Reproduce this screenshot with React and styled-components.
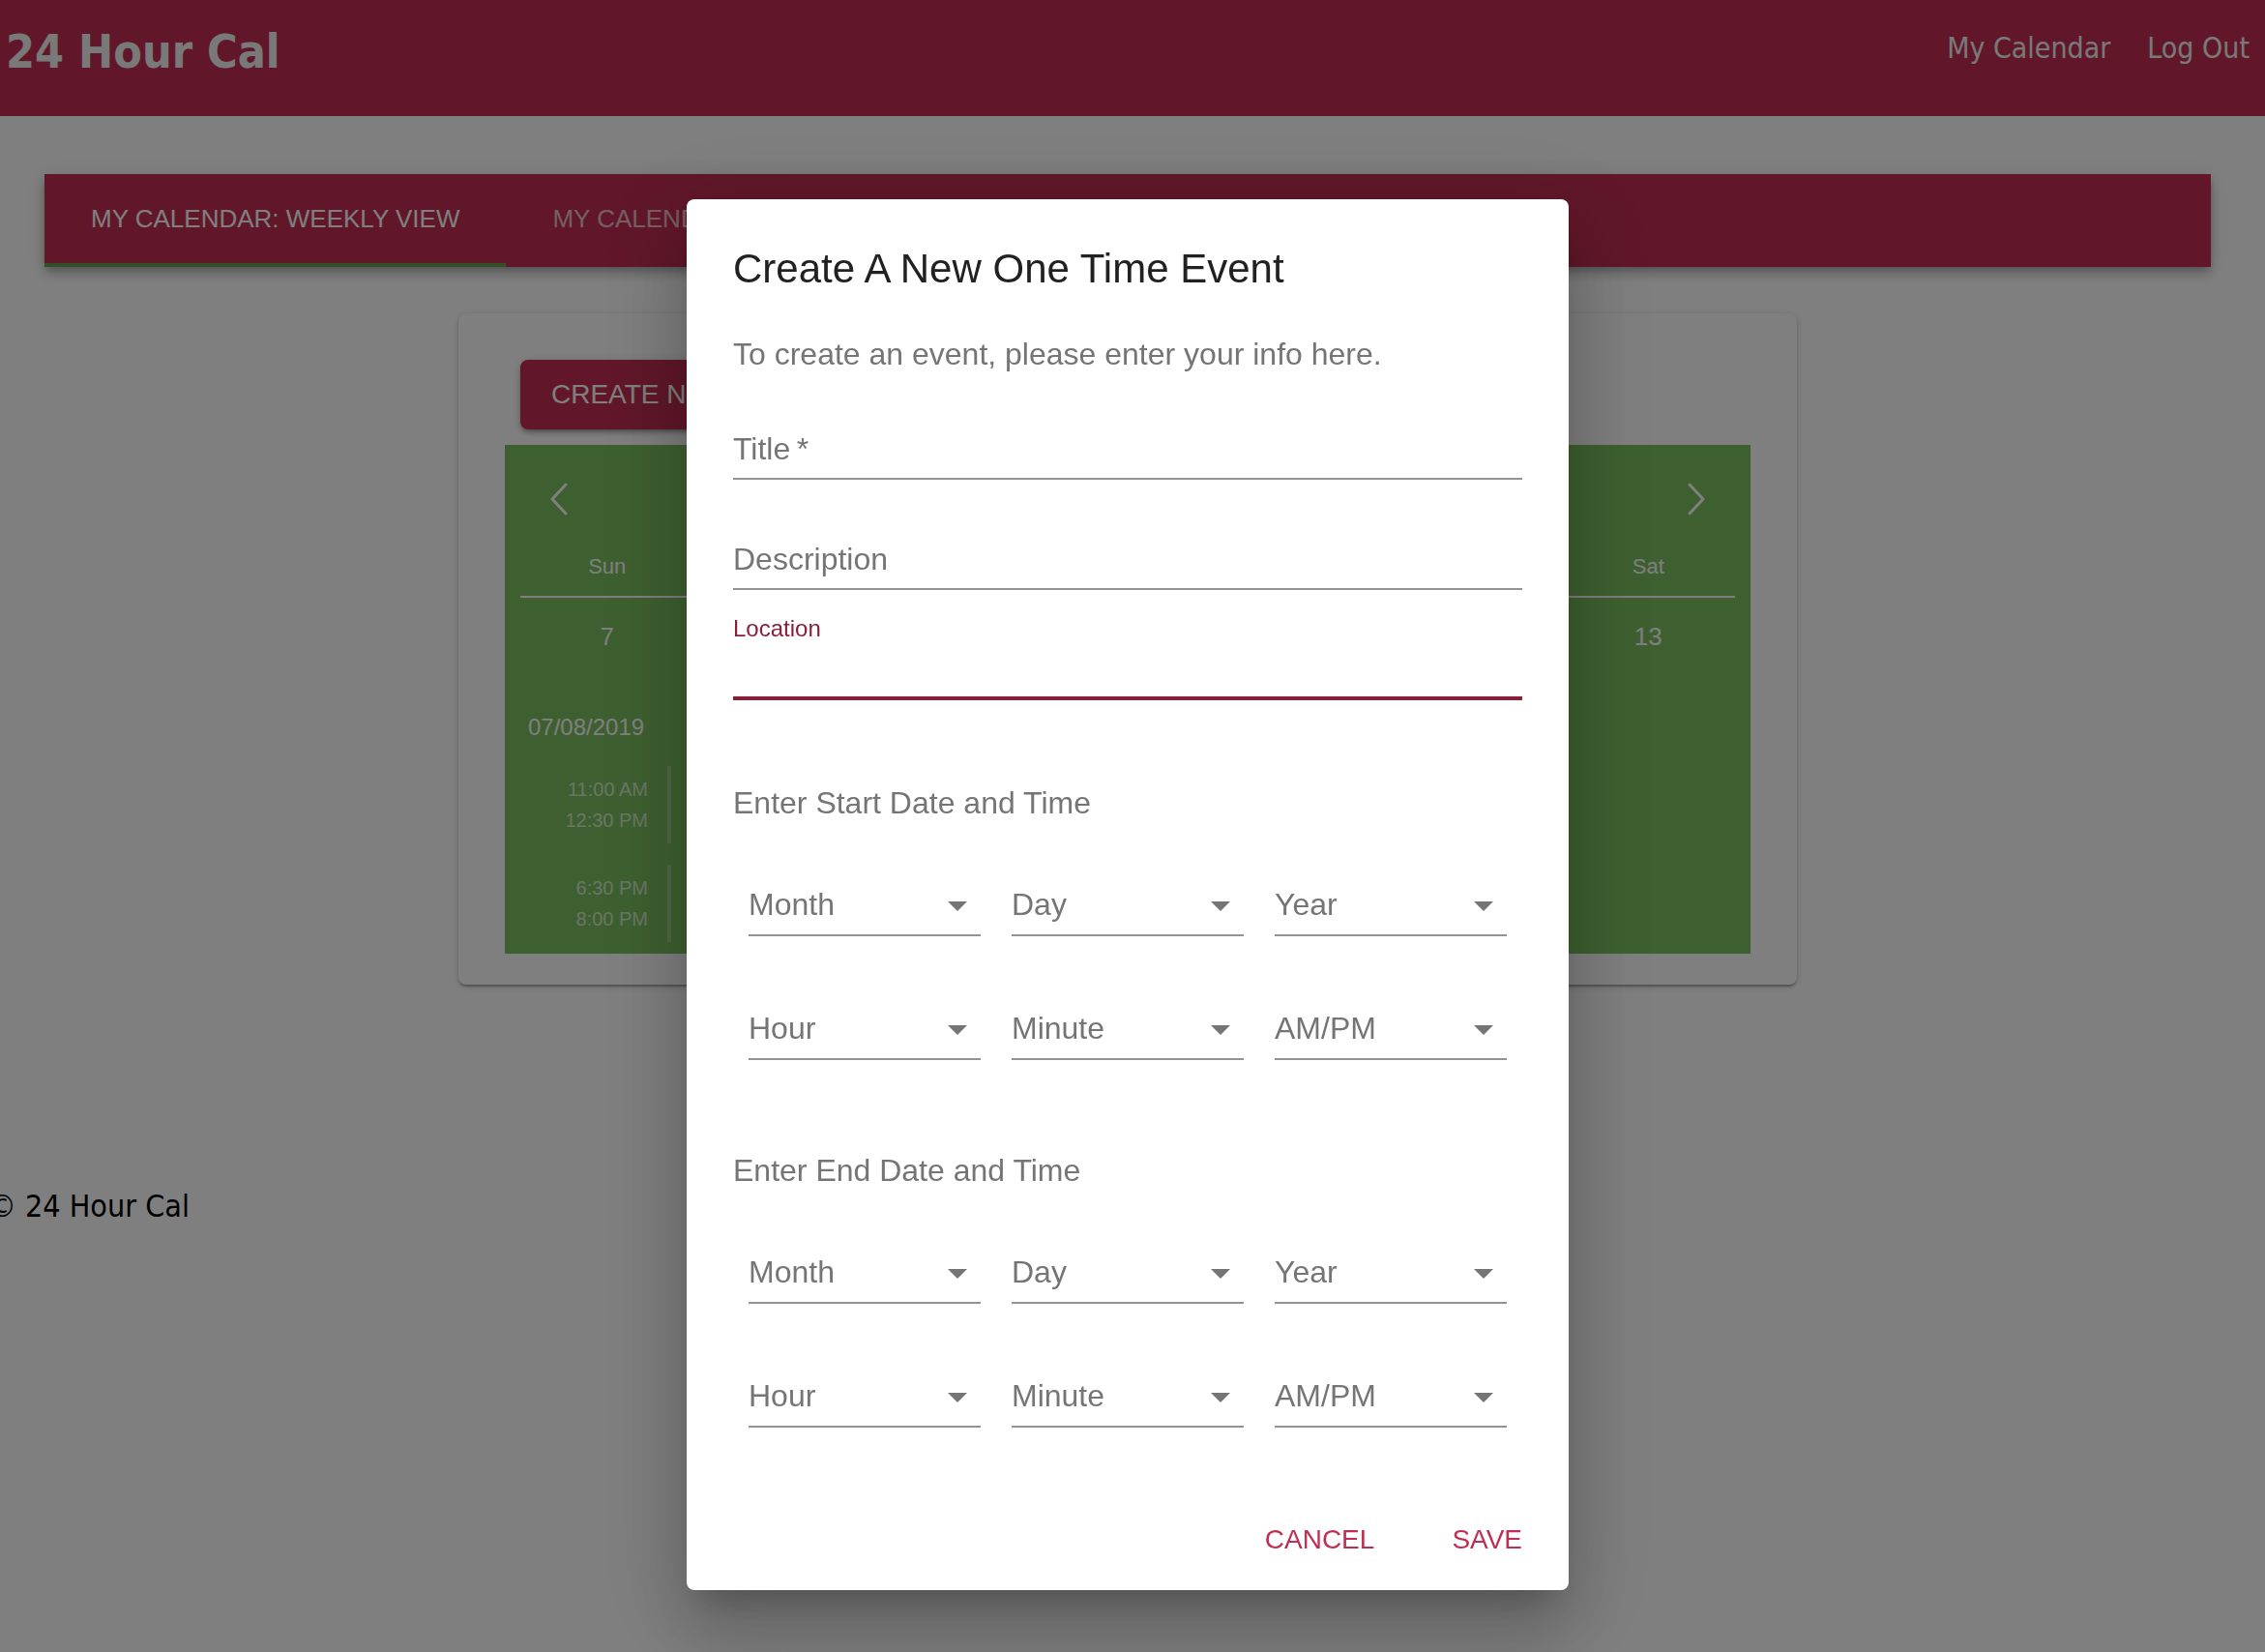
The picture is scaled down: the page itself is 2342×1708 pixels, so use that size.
import React, { useState } from "react";
import styled, { createGlobalStyle, ThemeProvider } from "styled-components";

const theme = {
  primary: "#c22e52",
  primaryDark: "#882039",
  green: "#7cc060",
  greenDark: "#64a04c",
  muted: "#757575",
  line: "#949494",
  body: '"Liberation Sans", Helvetica, Arial, sans-serif',
  brand: '"DejaVu Sans Condensed", Tahoma, "DejaVu Sans", sans-serif',
};

const GlobalStyle = createGlobalStyle`
  *, *::before, *::after { box-sizing: border-box; }
  body {
    margin: 0;
    overflow: hidden;
    background: #fff;
    color: #000;
    font-family: ${theme.body};
  }
  h1, h2, p { margin: 0; font-weight: 400; }
  button, input, select { font-family: inherit; border: 0; background: none; padding: 0; margin: 0; }
`;

const Header = styled.header`
  display: flex;
  justify-content: space-between;
  align-items: flex-start;
  height: 120px;
  padding: 20px 16px 0 6px;
  background: ${(p) => p.theme.primary};
  color: #f2f2f2;
  font-family: ${(p) => p.theme.brand};
`;

const Brand = styled.h1`
  font-size: 48px;
  line-height: 66px;
  && { font-weight: 700; }
`;

const Nav = styled.nav`
  display: flex;
  gap: 38px;
`;

const NavLink = styled.a`
  color: inherit;
  font-size: 30px;
  line-height: 60px;
  text-decoration: none;
`;

const Main = styled.main`
  display: flex;
  flex-direction: column;
  gap: 48px;
  padding: 60px 56px 0 46px;
`;

const Tabs = styled.div`
  display: flex;
  height: 96px;
  background: ${(p) => p.theme.primary};
  box-shadow: 0 4px 8px -2px rgba(0, 0, 0, 0.2), 0 8px 10px rgba(0, 0, 0, 0.14),
    0 2px 20px rgba(0, 0, 0, 0.12);
`;

const Tab = styled.button`
  && {
    padding: 0 48px;
    border-bottom: 4px solid ${(p) => (p.$active ? p.theme.greenDark : "transparent")};
  }
  color: ${(p) => (p.$active ? "#fff" : "rgba(255, 255, 255, 0.7)")};
  font-size: 26px;
  line-height: 32px;
  text-transform: uppercase;
  white-space: nowrap;
`;

const Card = styled.section`
  align-self: center;
  display: flex;
  flex-direction: column;
  align-items: flex-start;
  gap: 16px;
  width: 100%;
  max-width: 1384px;
  padding: 48px 48px 32px;
  border-radius: 8px;
  background: #fff;
  box-shadow: 0 2px 6px rgba(0, 0, 0, 0.2), 0 2px 2px rgba(0, 0, 0, 0.14),
    0 4px 2px -2px rgba(0, 0, 0, 0.12);
`;

const CreateButton = styled.button`
  height: 72px;
  margin-left: 16px;
  && { padding: 0 32px; margin-left: 16px; }
  border-radius: 8px;
  background: ${(p) => p.theme.primary};
  color: #fff;
  font-size: 28px;
  text-transform: uppercase;
  box-shadow: 0 2px 10px rgba(0, 0, 0, 0.2), 0 4px 4px rgba(0, 0, 0, 0.14),
    0 6px 2px -4px rgba(0, 0, 0, 0.12);
`;

const Calendar = styled.div`
  align-self: stretch;
  padding: 0 16px 12px;
  background: ${(p) => p.theme.green};
  color: #fff;
`;

const WeekNav = styled.div`
  display: flex;
  justify-content: space-between;
  align-items: center;
  height: 112px;
  padding: 0 30px;
`;

const ArrowButton = styled.button`
  display: flex;
  color: #fff;
`;

const Week = styled.div`
  display: grid;
  grid-template-columns: repeat(7, 1fr);
  text-align: center;
`;

const Weekdays = styled(Week)`
  padding-bottom: 16px;
  border-bottom: 2px solid #fff;
  font-size: 22px;
  line-height: 28px;
`;

const Dates = styled(Week)`
  padding-top: 24px;
  font-size: 26px;
  line-height: 32px;
`;

const Agenda = styled.div`
  display: flex;
  flex-direction: column;
  gap: 22px;
  padding-top: 62px;
`;

const AgendaDate = styled.p`
  padding: 0 8px 2px;
  font-size: 24px;
  line-height: 32px;
`;

const Slot = styled.div`
  display: flex;
  align-items: center;
  gap: 20px;
  height: 80px;
`;

const SlotTimes = styled.div`
  display: flex;
  flex-direction: column;
  width: 132px;
  color: rgba(255, 255, 255, 0.7);
  font-size: 20px;
  line-height: 32px;
  text-align: right;
`;

const SlotBar = styled.span`
  width: 4px;
  height: 80px;
  background: rgba(255, 255, 255, 0.3);
`;

const Footer = styled.footer`
  margin: 205px 0 0 -12px;
  font-family: ${(p) => p.theme.brand};
  font-size: 32px;
  line-height: 48px;
`;

const Backdrop = styled.div`
  position: fixed;
  inset: 0;
  display: flex;
  justify-content: center;
  align-items: flex-start;
  padding: 206px 10px 0 0;
  background: rgba(0, 0, 0, 0.5);
`;

const Dialog = styled.form`
  width: 912px;
  max-width: 100%;
  border-radius: 8px;
  background: #fff;
  box-shadow: 0 22px 30px -14px rgba(0, 0, 0, 0.2), 0 48px 76px 6px rgba(0, 0, 0, 0.14),
    0 18px 92px 16px rgba(0, 0, 0, 0.12);
`;

const DialogTitle = styled.h2`
  padding: 48px 48px 40px;
  color: #212121;
  font-size: 42px;
  line-height: 48px;
`;

const DialogBody = styled.div`
  display: flex;
  flex-direction: column;
  padding: 0 48px 48px;
`;

const DialogText = styled.p`
  color: ${(p) => p.theme.muted};
  font-size: 32px;
  line-height: 48px;
`;

const Field = styled.div`
  display: grid;
  grid-template-rows: 32px 58px;
  margin: 16px 0 8px;
`;

const FieldLabel = styled.label`
  grid-column: 1;
  grid-row: ${(p) => (p.$raised ? 1 : 2)};
  padding-top: ${(p) => (p.$raised ? 0 : 10)}px;
  color: ${(p) => (p.$raised ? p.theme.primaryDark : p.theme.muted)};
  font-size: ${(p) => (p.$raised ? 24 : 32)}px;
  line-height: 32px;
  pointer-events: none;
`;

const TextInput = styled.input`
  grid-column: 1;
  grid-row: 2;
  width: 100%;
  font-size: 32px;
  outline: none;
  && {
    border-bottom: ${(p) =>
      p.$active ? `4px solid ${p.theme.primaryDark}` : `2px solid ${p.theme.line}`};
  }
`;

const Section = styled.section`
  padding: 74px 0 16px;
`;

const SelectGrid = styled.div`
  display: grid;
  grid-template-columns: repeat(3, 1fr);
  gap: 64px 32px;
  padding: 50px 16px 0;
`;

const SelectWrap = styled.div`
  display: grid;
  grid-template-columns: 1fr;
  align-items: center;
  height: 64px;
`;

const Select = styled.select`
  grid-area: 1 / 1;
  width: 100%;
  height: 64px;
  appearance: none;
  color: ${(p) => p.theme.muted};
  font-size: 32px;
  line-height: 38px;
  outline: none;
  && {
    border-bottom: 2px solid ${(p) => p.theme.line};
    border-radius: 0;
  }
`;

const DropIcon = styled.svg`
  grid-area: 1 / 1;
  justify-self: end;
  width: 48px;
  height: 48px;
  fill: ${(p) => p.theme.muted};
  pointer-events: none;
`;

const Actions = styled.div`
  display: flex;
  justify-content: flex-end;
  gap: 16px;
  padding: 16px;
`;

const TextButton = styled.button`
  height: 72px;
  && { padding: 0 32px; }
  color: ${(p) => p.theme.primary};
  font-size: 28px;
  text-transform: uppercase;
`;

function Arrow({ label, d }) {
  return (
    <ArrowButton type="button" aria-label={label}>
      <svg width="20" height="36" viewBox="0 0 20 36" fill="none" stroke="currentColor"
        strokeWidth="3" strokeLinecap="round" strokeLinejoin="round" aria-hidden="true">
        <path d={d} />
      </svg>
    </ArrowButton>
  );
}

function TextField({ id, label, required, active, onFocus }) {
  const [value, setValue] = useState("");
  const raised = active || value !== "";
  return (
    <Field>
      <FieldLabel htmlFor={id} $raised={raised}>
        {label}
        {required && "\u2009*"}
      </FieldLabel>
      <TextInput id={id} type="text" required={required} value={value} $active={active}
        onFocus={onFocus} onChange={(e) => setValue(e.target.value)} />
    </Field>
  );
}

function DateTimeSection({ title, name }) {
  return (
    <Section>
      <DialogText>{title}</DialogText>
      <SelectGrid>
        {["Month", "Day", "Year", "Hour", "Minute", "AM/PM"].map((part) => (
          <SelectWrap key={part}>
            <Select aria-label={`${name} ${part}`} defaultValue="">
              <option value="">{part}</option>
            </Select>
            <DropIcon viewBox="0 0 24 24" aria-hidden="true">
              <path d="M7 10l5 5 5-5z" />
            </DropIcon>
          </SelectWrap>
        ))}
      </SelectGrid>
    </Section>
  );
}

const weekdays = ["Sun", "Mon", "Tue", "Wed", "Thu", "Fri", "Sat"];
const slots = [
  ["11:00 AM", "12:30 PM"],
  ["6:30 PM", "8:00 PM"],
];

export default function App() {
  const [focused, setFocused] = useState("location");
  return (
    <ThemeProvider theme={theme}>
      <GlobalStyle />
      <Header>
        <Brand>24 Hour Cal</Brand>
        <Nav>
          <NavLink href="#calendar">My Calendar</NavLink>
          <NavLink href="#logout">Log Out</NavLink>
        </Nav>
      </Header>
      <Main>
        <Tabs role="tablist">
          <Tab type="button" role="tab" aria-selected="true" $active>
            My Calendar: Weekly View
          </Tab>
          <Tab type="button" role="tab" aria-selected="false">
            My Calendar: Daily View
          </Tab>
        </Tabs>
        <Card>
          <CreateButton type="button">Create New</CreateButton>
          <Calendar>
            <WeekNav>
              <Arrow label="Previous week" d="M17 3 3 18l14 15" />
              <Arrow label="Next week" d="M3 3l14 15L3 33" />
            </WeekNav>
            <Weekdays>
              {weekdays.map((day) => (
                <span key={day}>{day}</span>
              ))}
            </Weekdays>
            <Dates>
              {weekdays.map((day, i) => (
                <span key={day}>{7 + i}</span>
              ))}
            </Dates>
            <Agenda>
              <AgendaDate>07/08/2019</AgendaDate>
              {slots.map(([start, end]) => (
                <Slot key={start}>
                  <SlotTimes>
                    <span>{start}</span>
                    <span>{end}</span>
                  </SlotTimes>
                  <SlotBar />
                </Slot>
              ))}
            </Agenda>
          </Calendar>
        </Card>
      </Main>
      <Footer>© 24 Hour Cal</Footer>

      <Backdrop>
        <Dialog role="dialog" aria-labelledby="dialog-title" onSubmit={(e) => e.preventDefault()}>
          <DialogTitle id="dialog-title">Create A New One Time Event</DialogTitle>
          <DialogBody>
            <DialogText>To create an event, please enter your info here.</DialogText>
            <TextField id="title" label="Title" required active={focused === "title"}
              onFocus={() => setFocused("title")} />
            <TextField id="description" label="Description" active={focused === "description"}
              onFocus={() => setFocused("description")} />
            <TextField id="location" label="Location" active={focused === "location"}
              onFocus={() => setFocused("location")} />
            <DateTimeSection title="Enter Start Date and Time" name="Start" />
            <DateTimeSection title="Enter End Date and Time" name="End" />
          </DialogBody>
          <Actions>
            <TextButton type="button">Cancel</TextButton>
            <TextButton type="submit">Save</TextButton>
          </Actions>
        </Dialog>
      </Backdrop>
    </ThemeProvider>
  );
}
